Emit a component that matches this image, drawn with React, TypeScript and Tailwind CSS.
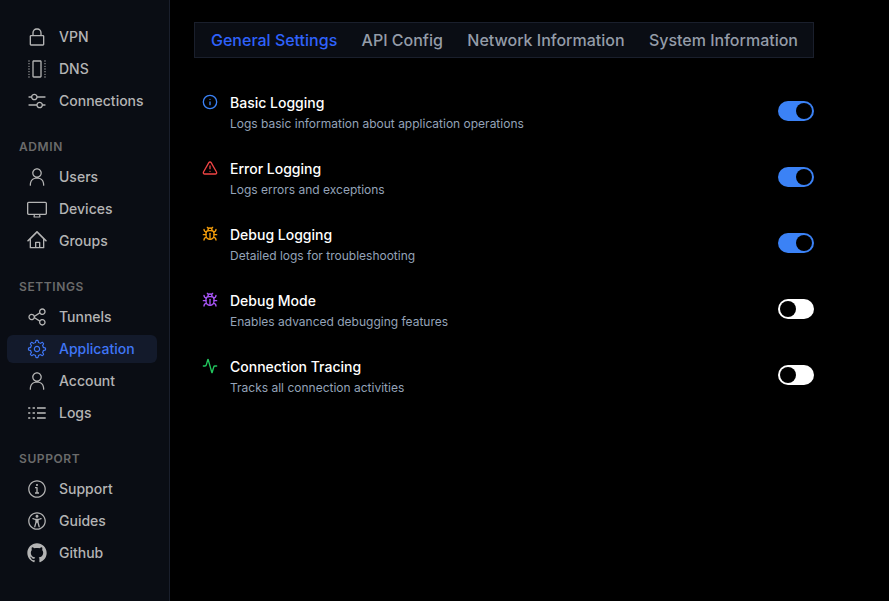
import type { ComponentType, ReactNode } from "react";
import { Activity, Bug, Info, TriangleAlert } from "lucide-react";
import { RxAccessibility, RxContainer, RxDesktop, RxGear, RxGithubLogo, RxHome, RxInfoCircled, RxLockClosed, RxMixerHorizontal, RxPerson, RxShare1 } from "react-icons/rx";

type Icon = ComponentType<{ className?: string }>;

// Three log rows, each a marker, a short tag and a long line.
function LogsIcon({ className }: { className?: string }) {
  return (
    <svg viewBox="0 0 20 20" fill="currentColor" className={className}>
      {[4, 9, 14].map((y) => (
        <g key={y}>
          <rect x="1.2" y={y + 0.2} width="2.1" height="1.6" />
          <rect x="5.6" y={y + 0.2} width="2.3" height="1.6" />
          <rect x="10" y={y + 0.2} width="8.7" height="1.6" />
        </g>
      ))}
    </svg>
  );
}

function Item({ icon: I, children, active = false }: { icon: Icon; children: ReactNode; active?: boolean }) {
  return (
    <a className={"flex h-7 items-center gap-3 rounded-md pl-5 text-[14px] font-medium " + (active ? "bg-[#131a2b] text-[#3f76f6]" : "text-[#b4b4b4]")}>
      <I className="size-5" />
      <span className="pb-0.5">{children}</span>
    </a>
  );
}

function Heading({ children }: { children: ReactNode }) {
  return <h2 className="mb-1 pl-3 text-[12px] leading-4 font-semibold tracking-[0.6px] text-[#6b6b6b]">{children}</h2>;
}

const settings = [
  { icon: Info, color: "text-[#3b82f6]", title: "Basic Logging", text: "Logs basic information about application operations", on: true },
  { icon: TriangleAlert, color: "text-[#ef4444]", title: "Error Logging", text: "Logs errors and exceptions", on: true },
  { icon: Bug, color: "text-[#f59e0b]", title: "Debug Logging", text: "Detailed logs for troubleshooting", on: true },
  { icon: Bug, color: "text-[#a855f7]", title: "Debug Mode", text: "Enables advanced debugging features", on: false },
  { icon: Activity, color: "text-[#22c55e]", title: "Connection Tracing", text: "Tracks all connection activities", on: false },
];

export default function App() {
  return (
    <div className="flex h-[601px] w-[889px] overflow-hidden bg-black font-['Inter',sans-serif]">
      <aside className="flex w-[170px] shrink-0 flex-col gap-6 border-r border-[#1a1f2c] bg-[#0a0d14] pt-[23px] pr-3 pl-[7px]">
        <nav className="flex flex-col gap-1">
          <Item icon={RxLockClosed}>VPN</Item>
          <Item icon={RxContainer}>DNS</Item>
          <Item icon={RxMixerHorizontal}>Connections</Item>
        </nav>
        <nav className="flex flex-col gap-1">
          <Heading>ADMIN</Heading>
          <Item icon={RxPerson}>Users</Item>
          <Item icon={RxDesktop}>Devices</Item>
          <Item icon={RxHome}>Groups</Item>
        </nav>
        <nav className="flex flex-col gap-1">
          <Heading>SETTINGS</Heading>
          <Item icon={RxShare1}>Tunnels</Item>
          <Item icon={RxGear} active>Application</Item>
          <Item icon={RxPerson}>Account</Item>
          <Item icon={LogsIcon}>Logs</Item>
        </nav>
        <nav className="flex flex-col gap-1">
          <Heading>SUPPORT</Heading>
          <Item icon={RxInfoCircled}>Support</Item>
          <Item icon={RxAccessibility}>Guides</Item>
          <Item icon={RxGithubLogo}>Github</Item>
        </nav>
      </aside>
      <main className="flex w-[644px] flex-col pt-[22px] pl-6">
        <div className="flex h-9 items-center justify-between border border-[#1a1f2c] bg-[#0a0d14] pr-[15px] pl-4 text-[16px] font-medium text-[#949ca8]">
          <span className="text-[#2f62fb]">General Settings</span>
          <span>API Config</span>
          <span>Network Information</span>
          <span>System Information</span>
        </div>
        <ul className="mt-9 flex flex-col gap-6 pl-2">
          {settings.map((s) => (
            <li key={s.title} className="flex h-[42px] items-start gap-3">
              <s.icon className={"size-4 " + s.color} />
              <div className="flex-1">
                <h3 className="text-[14px] leading-[18px] font-medium text-white">{s.title}</h3>
                <p className="mt-1 text-[12px] leading-4 text-[#94a3b8]">{s.text}</p>
              </div>
              <span className={"mt-[7px] flex h-5 w-9 items-center rounded-full p-0.5 " + (s.on ? "justify-end bg-[#3b82f6]" : "bg-white")}>
                <span className="size-4 rounded-full bg-black" />
              </span>
            </li>
          ))}
        </ul>
      </main>
    </div>
  );
}
